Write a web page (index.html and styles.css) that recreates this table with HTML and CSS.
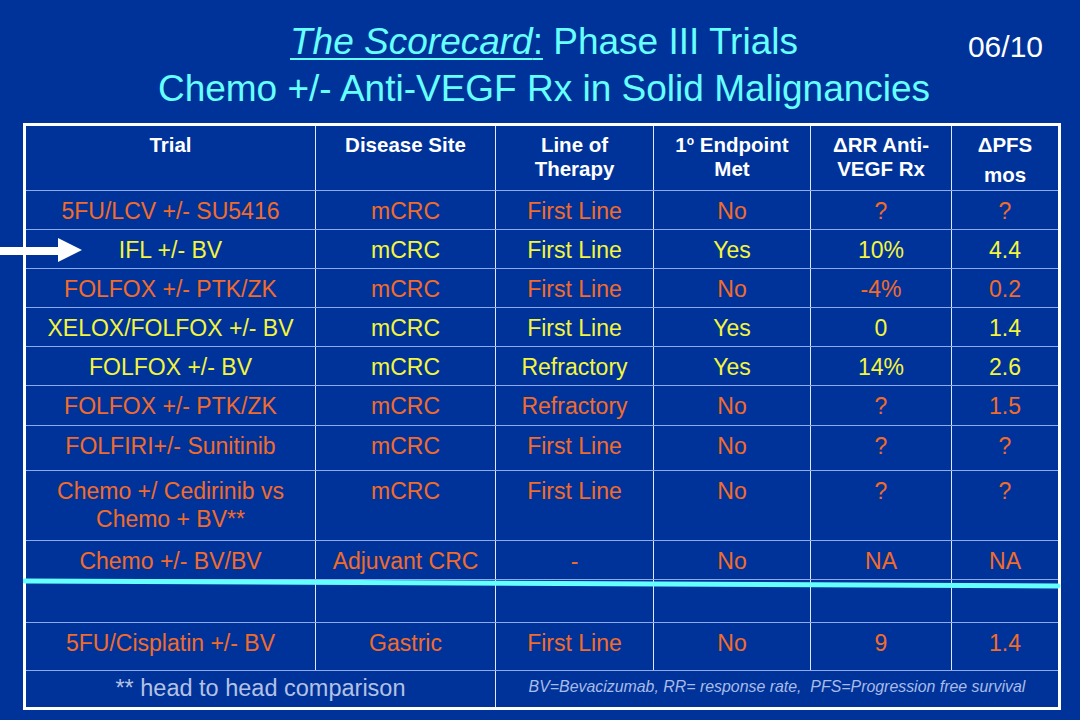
FILE: index.html
```html
<!DOCTYPE html>
<html lang="en">
<head>
<meta charset="utf-8">
<title>The Scorecard: Phase III Trials</title>
<link rel="stylesheet" href="styles.css">
</head>
<body>
<header class="head">
  <div class="spacer"></div>
  <h1 class="title"><span class="u"><em>The Scorecard</em>:</span> Phase III Trials<br>Chemo +/- Anti-VEGF Rx in Solid Malignancies</h1>
  <div class="date">06/10</div>
</header>
<main class="wrap">
  <table class="score">
    <colgroup>
      <col class="c1"><col class="c2"><col class="c3"><col class="c4"><col class="c5"><col class="c6">
    </colgroup>
    <thead>
      <tr class="hrow">
        <th>Trial</th>
        <th>Disease Site</th>
        <th>Line of<br>Therapy</th>
        <th>1<sup class="deg">o</sup> Endpoint<br>Met</th>
        <th>&Delta;RR Anti-<br>VEGF Rx</th>
        <th class="pfs">&Delta;PFS<br>mos</th>
      </tr>
    </thead>
    <tbody>
      <tr class="o r39"><td>5FU/LCV +/- SU5416</td><td>mCRC</td><td>First Line</td><td>No</td><td>?</td><td>?</td></tr>
      <tr class="y r39"><td>IFL +/- BV</td><td>mCRC</td><td>First Line</td><td>Yes</td><td>10%</td><td>4.4</td></tr>
      <tr class="o r39"><td>FOLFOX +/- PTK/ZK</td><td>mCRC</td><td>First Line</td><td>No</td><td>-4%</td><td>0.2</td></tr>
      <tr class="y r39"><td>XELOX/FOLFOX +/- BV</td><td>mCRC</td><td>First Line</td><td>Yes</td><td>0</td><td>1.4</td></tr>
      <tr class="y r39"><td>FOLFOX +/- BV</td><td>mCRC</td><td>Refractory</td><td>Yes</td><td>14%</td><td>2.6</td></tr>
      <tr class="o r40"><td>FOLFOX +/- PTK/ZK</td><td>mCRC</td><td>Refractory</td><td>No</td><td>?</td><td>1.5</td></tr>
      <tr class="o r45"><td>FOLFIRI+/- Sunitinib</td><td>mCRC</td><td>First Line</td><td>No</td><td>?</td><td>?</td></tr>
      <tr class="o r70"><td>Chemo +/ Cedirinib vs<br>Chemo + BV**</td><td>mCRC</td><td>First Line</td><td>No</td><td>?</td><td>?</td></tr>
      <tr class="o r39"><td>Chemo +/- BV/BV</td><td>Adjuvant CRC</td><td>-</td><td>No</td><td>NA</td><td>NA</td></tr>
      <tr class="o r43"><td></td><td></td><td></td><td></td><td></td><td></td></tr>
      <tr class="o r48"><td>5FU/Cisplatin +/- BV</td><td>Gastric</td><td>First Line</td><td>No</td><td>9</td><td>1.4</td></tr>
      <tr class="foot"><td colspan="2" class="note">** head to head comparison</td><td colspan="4" class="legend">BV=Bevacizumab, RR= response rate,  PFS=Progression free survival</td></tr>
    </tbody>
  </table>
  <svg class="arrow" width="84" height="26" viewBox="0 0 84 26" aria-hidden="true">
    <polygon points="0,9 58,9 58,0 82,12 58,24 58,17 0,17" fill="#ffffff"/>
  </svg>
  <svg class="strike" width="1040" height="16" viewBox="0 0 1040 16" aria-hidden="true">
    <line x1="2" y1="6" x2="1035" y2="11" stroke="#66ffff" stroke-width="5" stroke-linecap="round"/>
  </svg>
</main>
</body>
</html>
```

FILE: styles.css
```css
html, body {
  margin: 0;
  padding: 0;
}

body {
  background: #003399;
  font-family: "Liberation Sans", Arial, sans-serif;
  width: 1080px;
  height: 720px;
  overflow: hidden;
}

.head {
  display: grid;
  grid-template-columns: 148px 1fr 140px;
  height: 112px;
  box-sizing: border-box;
  padding-top: 18px;
}

.title {
  grid-column: 2;
  margin: 0;
  text-align: center;
  font-weight: normal;
  font-size: 37px;
  line-height: 47px;
  color: #66ffff;
  white-space: nowrap;
}

.title .u {
  text-decoration: underline;
  text-decoration-thickness: 2px;
  text-underline-offset: 4px;
}

.date {
  grid-column: 3;
  color: #ffffff;
  font-size: 30px;
  line-height: 47px;
  padding-top: 5px;
  padding-right: 37px;
  text-align: right;
}

.wrap {
  position: relative;
  width: 1035px;
  margin: 11px 0 0 23px;
}

.score {
  border-collapse: collapse;
  table-layout: fixed;
  width: 1035px;
  border: 3px solid #ffffff;
}

.c1 { width: 291px; }
.c2 { width: 180px; }
.c3 { width: 158px; }
.c4 { width: 157px; }
.c5 { width: 141px; }
.c6 { width: 108px; }

.score th,
.score td {
  border-top: 1px solid #8eaaf0;
  border-bottom: 1px solid #8eaaf0;
  border-left: 1px solid #dfe7ff;
  border-right: 1px solid #dfe7ff;
  text-align: center;
  vertical-align: top;
  padding: 6px 0 0;
  white-space: nowrap;
}

.score th {
  color: #ffffff;
  font-size: 20.5px;
  font-weight: bold;
  line-height: 24px;
  padding-top: 7px;
}

.score .pfs {
  line-height: 30px;
  padding-top: 4px;
}

.deg {
  font-size: 12px;
  vertical-align: 7px;
  line-height: 0;
}

.score td {
  font-size: 23px;
  line-height: 28px;
}

.hrow { height: 66px; }
.r39 { height: 39px; }
.r40 { height: 40px; }
.r45 { height: 45px; }
.r48 { height: 48px; }
.r43 { height: 43px; }
.r70 { height: 70px; }
.foot { height: 38px; }

.o td { color: #f26b2a; }
.y td { color: #f5f53c; }

.foot .note {
  color: #b4c2e4;
  font-size: 23.5px;
  padding-top: 3px;
}

.foot .legend {
  color: #a9bbe8;
  font-size: 15.9px;
  font-style: italic;
  white-space: pre;
  padding-top: 2px;
}

.arrow {
  position: absolute;
  left: -23px;
  top: 115px;
}

.strike {
  position: absolute;
  left: 0;
  top: 452px;
}
```
